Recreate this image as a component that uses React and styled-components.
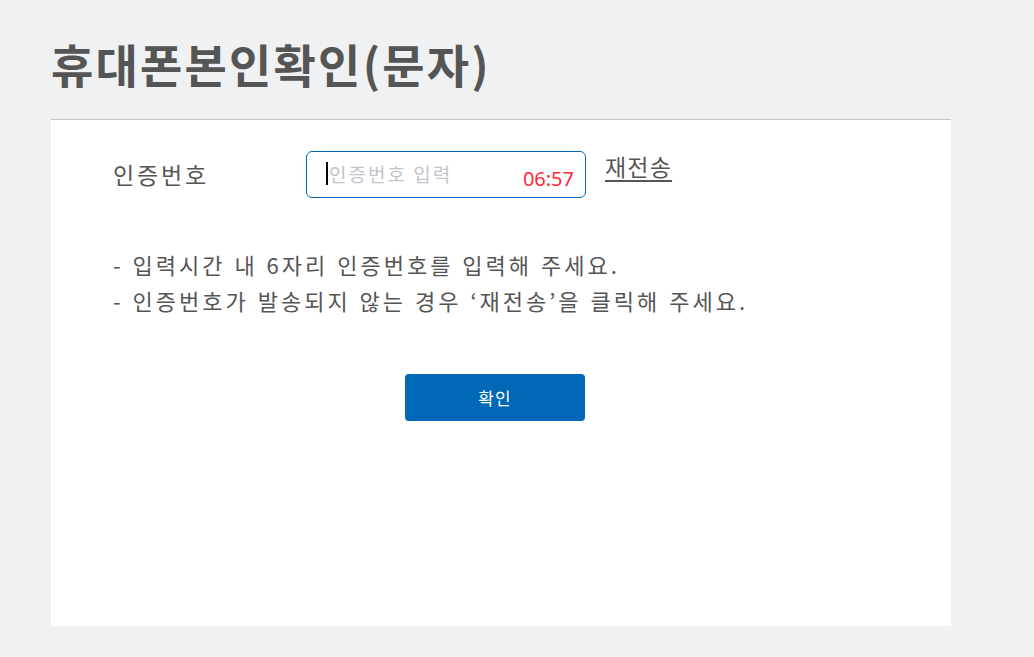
import React from "react"
import styled, { createGlobalStyle } from "styled-components"

const GlobalStyle = createGlobalStyle`
  html, body {
    margin: 0;
    padding: 0;
    background: #f0f1f3;
  }

  body {
    font-family: "Noto Sans CJK KR", "Noto Sans", sans-serif;
    color: #555;
  }
`

const Page = styled.main`
  width: 1034px;
  height: 657px;
  box-sizing: border-box;
  padding: 31px 0 0 51px;
  overflow: hidden;
`

const Title = styled.h1`
  margin: 0 0 24px;
  font-size: 46px;
  line-height: 64px;
  font-weight: 700;
  color: #555;
  letter-spacing: 2.2px;
`

const Card = styled.section`
  width: 900px;
  height: 507px;
  box-sizing: border-box;
  background: #fff;
  border-top: 1px solid #c4c5c8;
  padding: 31px 74px 0 62px;
`

const Row = styled.div`
  display: flex;
  align-items: flex-start;
`

const Label = styled.label`
  width: 193px;
  font-size: 23px;
  line-height: 47px;
  letter-spacing: 2.8px;
  color: #555;
`

const InputBox = styled.div`
  width: 280px;
  height: 47px;
  box-sizing: border-box;
  border: 1px solid #0068b7;
  border-radius: 6px;
  display: flex;
  align-items: center;
  padding: 0 11px 0 19px;
`

const Caret = styled.span`
  width: 2px;
  height: 23px;
  background: #000;
  margin-right: 1px;
  margin-top: -2px;
`

const Placeholder = styled.span`
  flex: 1;
  font-size: 19px;
  letter-spacing: 2px;
  color: #c3c4cb;
  margin-top: -3px;
`

const Timer = styled.span`
  font-family: "Noto Sans", "Open Sans", sans-serif;
  font-size: 20px;
  color: #ff2a3a;
  align-self: flex-end;
  margin-bottom: 5px;
`

const Resend = styled.a`
  margin-left: 19px;
  font-size: 23px;
  line-height: 30px;
  letter-spacing: 1.2px;
  color: #555;
  text-decoration: underline;
  text-underline-offset: 4px;
  cursor: pointer;
`

const Notes = styled.ul`
  list-style: none;
  margin: 48px 0 0;
  padding: 0;
  font-size: 22px;
  line-height: 36px;
  letter-spacing: 3px;
  word-spacing: 1px;
  color: #555;
`

const ButtonRow = styled.div`
  display: flex;
  justify-content: center;
  margin-top: 56px;
`

const Button = styled.button`
  width: 180px;
  height: 47px;
  border: none;
  border-radius: 4px;
  background: #0068b7;
  color: #fff;
  font-family: inherit;
  font-size: 17px;
  letter-spacing: 1px;
  cursor: pointer;
`

export default function App() {
  return (
    <Page>
      <GlobalStyle />
      <Title>휴대폰본인확인(문자)</Title>
      <Card>
        <Row>
          <Label>인증번호</Label>
          <InputBox>
            <Caret />
            <Placeholder>인증번호 입력</Placeholder>
            <Timer>06:57</Timer>
          </InputBox>
          <Resend>재전송</Resend>
        </Row>
        <Notes>
          <li>- 입력시간 내 6자리 인증번호를 입력해 주세요.</li>
          <li>- 인증번호가 발송되지 않는 경우 ‘재전송’을 클릭해 주세요.</li>
        </Notes>
        <ButtonRow>
          <Button>확인</Button>
        </ButtonRow>
      </Card>
    </Page>
  )
}
